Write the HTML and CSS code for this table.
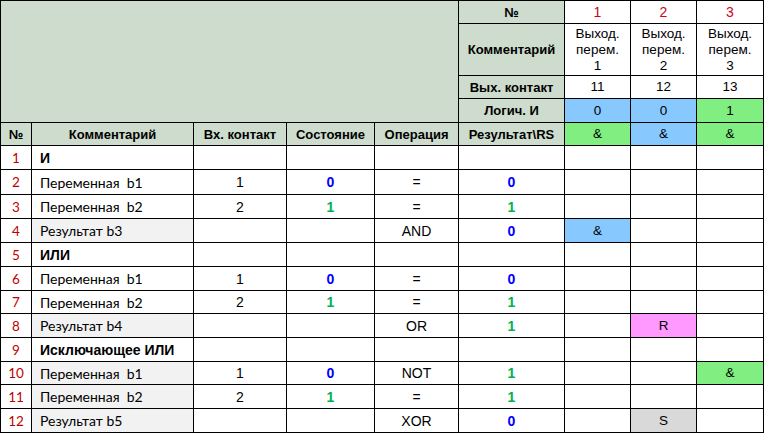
FILE: index.html
```html
<!DOCTYPE html>
<html lang="ru">
<head>
<meta charset="utf-8">
<title>Логика</title>
<link rel="stylesheet" href="styles.css">
</head>
<body>
<table class="sheet">
  <colgroup>
    <col class="w-num"><col class="w-com"><col class="w-in"><col class="w-st"><col class="w-op"><col class="w-res"><col class="w-o"><col class="w-o"><col class="w-o3">
  </colgroup>
  <tr class="r23">
    <td class="corner" colspan="5" rowspan="4"></td>
    <th class="lab">№</th>
    <td class="red">1</td><td class="red">2</td><td class="red">3</td>
  </tr>
  <tr class="r52">
    <th class="lab">Комментарий</th>
    <td class="out">Выход.<br>перем.<br>1</td>
    <td class="out">Выход.<br>перем.<br>2</td>
    <td class="out">Выход.<br>перем.<br>3</td>
  </tr>
  <tr class="r23">
    <th class="lab">Вых. контакт</th>
    <td class="out">11</td><td class="out">12</td><td class="out">13</td>
  </tr>
  <tr class="r24">
    <th class="lab">Логич. И</th>
    <td class="out blue">0</td><td class="out blue">0</td><td class="out green">1</td>
  </tr>
  <tr class="r23">
    <th class="lab">№</th>
    <th class="lab">Комментарий</th>
    <th class="lab">Вх. контакт</th>
    <th class="lab">Состояние</th>
    <th class="lab">Операция</th>
    <th class="lab">Результат\RS</th>
    <td class="out green">&amp;</td><td class="out blue">&amp;</td><td class="out green">&amp;</td>
  </tr>

  <tr class="r24">
    <td class="idx">1</td><td class="sec">И</td><td></td><td></td><td></td><td></td><td></td><td></td><td></td>
  </tr>
  <tr class="r25">
    <td class="idx">2</td><td class="com">Переменная&nbsp; b1</td><td class="val">1</td><td class="v0">0</td><td class="val">=</td><td class="v0">0</td><td></td><td></td><td></td>
  </tr>
  <tr class="r24">
    <td class="idx">3</td><td class="com">Переменная&nbsp; b2</td><td class="val">2</td><td class="v1">1</td><td class="val">=</td><td class="v1">1</td><td></td><td></td><td></td>
  </tr>
  <tr class="r24">
    <td class="idx">4</td><td class="com grey">Результат b3</td><td></td><td></td><td class="val">AND</td><td class="v0">0</td><td class="out blue">&amp;</td><td></td><td></td>
  </tr>
  <tr class="r24">
    <td class="idx">5</td><td class="sec">ИЛИ</td><td></td><td></td><td></td><td></td><td></td><td></td><td></td>
  </tr>
  <tr class="r24">
    <td class="idx">6</td><td class="com">Переменная&nbsp; b1</td><td class="val">1</td><td class="v0">0</td><td class="val">=</td><td class="v0">0</td><td></td><td></td><td></td>
  </tr>
  <tr class="r23">
    <td class="idx">7</td><td class="com">Переменная&nbsp; b2</td><td class="val">2</td><td class="v1">1</td><td class="val">=</td><td class="v1">1</td><td></td><td></td><td></td>
  </tr>
  <tr class="r24">
    <td class="idx">8</td><td class="com grey">Результат b4</td><td></td><td></td><td class="val">OR</td><td class="v1">1</td><td></td><td class="out pink">R</td><td></td>
  </tr>
  <tr class="r24">
    <td class="idx">9</td><td class="sec">Исключающее ИЛИ</td><td></td><td></td><td></td><td></td><td></td><td></td><td></td>
  </tr>
  <tr class="r23">
    <td class="idx">10</td><td class="com grey">Переменная&nbsp; b1</td><td class="val">1</td><td class="v0">0</td><td class="val">NOT</td><td class="v1">1</td><td></td><td></td><td class="out green">&amp;</td>
  </tr>
  <tr class="r24">
    <td class="idx">11</td><td class="com grey">Переменная&nbsp; b2</td><td class="val">2</td><td class="v1">1</td><td class="val">=</td><td class="v1">1</td><td></td><td></td><td></td>
  </tr>
  <tr class="r24">
    <td class="idx">12</td><td class="com grey">Результат b5</td><td></td><td></td><td class="val">XOR</td><td class="v0">0</td><td></td><td class="out silver">S</td><td></td>
  </tr>
</table>
</body>
</html>
```
FILE: styles.css
```css
html, body {
  margin: 0;
  padding: 0;
  background: #ffffff;
}
.sheet {
  border-collapse: collapse;
  table-layout: fixed;
  font-family: "Liberation Sans", Arial, sans-serif;
  font-size: 13px;
  color: #000;
}
.sheet td, .sheet th {
  border: 1px solid #000;
  padding: 0;
  text-align: center;
  vertical-align: middle;
  overflow: hidden;
  white-space: nowrap;
}
.w-num { width: 31px; }
.w-com { width: 162px; }
.w-in { width: 93px; }
.w-st { width: 88px; }
.w-op { width: 84px; }
.w-res { width: 106px; }
.w-o { width: 66px; }
.w-o3 { width: 67px; }

.r23 td, .r23 th { height: 22px; }
.r24 td, .r24 th { height: 23px; }
.r25 td, .r25 th { height: 24px; }
.r52 td, .r52 th { height: 51px; }

.sheet .corner { background: #cddccd; }
.sheet .lab {
  background: #cddccd;
  font-weight: bold;
  font-size: 13px;
}
.sheet .red {
  color: #d0001c;
  font-size: 14px;
}
.sheet .out {
  font-size: 13.5px;
  line-height: 16px;
}
.sheet .blue { background: #87c8ff; }
.sheet .green { background: #80ee80; }
.sheet .pink { background: #ff99ff; }
.sheet .silver { background: #d9d9d9; }
.sheet .grey { background: #f2f2f2; }

.sheet .idx {
  font-family: Lato, "Open Sans", sans-serif;
  font-size: 13.5px;
  color: #c00000;
}
.sheet .com {
  text-align: left;
  padding-left: 8px;
  font-family: Lato, "Open Sans", sans-serif;
  font-size: 14px;
}
.sheet .sec {
  text-align: left;
  padding-left: 8px;
  font-weight: bold;
  font-size: 14px;
}
.sheet .val { font-size: 14px; }
.sheet .v0, .sheet .v1 {
  font-weight: bold;
  font-size: 14px;
}
.sheet .v0 { color: #0000ff; }
.sheet .v1 { color: #00b050; }
```
